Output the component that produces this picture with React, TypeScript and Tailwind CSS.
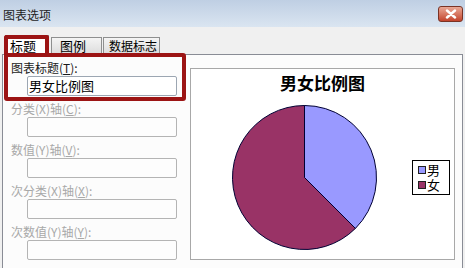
import React from "react";

function Field({ label, accel, enabled, value, last }: { label: string; accel: string; enabled?: boolean; value?: string; last?: boolean }) {
  return (
    <div className={last ? "flex flex-col" : "flex flex-col mb-[5px]"}>
      <div className={enabled ? "h-[16px] leading-[16px] text-[12px] text-[#1a1a1a] whitespace-nowrap" : "h-[16px] leading-[16px] text-[12px] text-[#a8a8a8] whitespace-nowrap"}>
        {label}(<span className="underline">{accel}</span>):
      </div>
      <div
        className={
          enabled
            ? "ml-[16px] w-[150px] h-[20px] border border-[#9ca6b2] rounded-[2px] bg-white flex items-center pl-[1px] text-[13px] leading-[18px] text-black"
            : "ml-[16px] w-[150px] h-[20px] border border-[#b4b4b4] rounded-[2px] bg-[#fdfdfd]"
        }
      >
        {value}
      </div>
    </div>
  );
}

function Pie() {
  const cx = 72.5;
  const cy = 72.5;
  const r = 72;
  const a = (135 * Math.PI) / 180;
  const ex = cx + r * Math.sin(a);
  const ey = cy - r * Math.cos(a);
  return (
    <svg width="145" height="145" viewBox="0 0 145 145">
      <path d={`M${cx},${cy} L${cx},${cy - r} A${r},${r} 0 0 1 ${ex},${ey} Z`} fill="#9999ff" stroke="#000033" strokeWidth="1" />
      <path d={`M${cx},${cy} L${ex},${ey} A${r},${r} 0 1 1 ${cx},${cy - r} Z`} fill="#993366" stroke="#000033" strokeWidth="1" />
    </svg>
  );
}

export default function App() {
  return (
    <div className="w-[465px] h-[268px] bg-[#f0f0f0] relative overflow-hidden font-['Noto_Sans_CJK_SC',sans-serif]">
      {/* title bar */}
      <div className="h-[27px] flex justify-between bg-linear-to-b from-[#bfcfe3] to-[#dae5f1]">
        <div className="pl-[3px] pt-[7px] text-[12px] leading-[16px] text-[#1e1e1e]">图表选项</div>
        <div className="mt-[6px] mr-[2px] w-[25px] h-[16px] rounded-[3px] border border-[#7a3325] bg-linear-to-b from-[#e9a896] to-[#c2432c] flex items-center justify-center">
          <svg width="12" height="10" viewBox="0 0 12 10">
            <path d="M2 1.5 L10 8.5 M10 1.5 L2 8.5" stroke="white" strokeWidth="2.4" strokeLinecap="round" />
          </svg>
        </div>
      </div>

      {/* tabs */}
      <div className="mt-[8px] pl-[5px] h-[20px] flex items-end gap-[1px] relative z-10">
        <div className="w-[44px] h-[20px] bg-white border-l border-t border-r border-[#898c95] flex items-start pl-[4px] pt-[2px] text-[13px] leading-[16px] text-black">标题</div>
        <div className="ml-[1px] w-[51px] h-[17px] mb-[1px] bg-linear-to-b from-[#f4f4f4] to-[#dcdcdc] border border-b-0 border-[#8e8f8f] flex items-center pl-[8px] text-[13px] leading-[16px] text-black">图例</div>
        <div className="w-[57px] h-[17px] mb-[1px] bg-linear-to-b from-[#f4f4f4] to-[#dcdcdc] border border-b-0 border-[#8e8f8f] flex items-center pl-[5px] text-[12px] leading-[16px] text-black">数据标志</div>
      </div>

      {/* panel */}
      <div className="mx-[2px] -mt-[1px] h-[220px] border border-[#898c95] bg-[#fcfcfc] flex">
        <div className="w-[187px] pl-[8px] pt-[5px] flex flex-col">
          <Field label="图表标题" accel="T" enabled value="男女比例图" />
          <Field label="分类(X)轴" accel="C" />
          <Field label="数值(Y)轴" accel="V" />
          <Field label="次分类(X)轴" accel="X" />
          <Field label="次数值(Y)轴" accel="Y" last />
        </div>
        <div className="mt-[13px] w-[265px] h-[192px] border border-[#a8a8a8] bg-white flex flex-col">
          <div className="pt-[3px] text-center text-[17px] leading-[22px] font-bold text-black">男女比例图</div>
          <div className="mt-[11px] flex items-center">
            <div className="ml-[41px]">
              <Pie />
            </div>
            <div className="ml-[35px] w-[38px] h-[35px] border border-black bg-white flex items-center pl-[5px]">
              <div className="flex flex-col gap-[7px]">
                <div className="w-[8px] h-[8px] border border-[#202020] bg-[#9999ff]" />
                <div className="w-[8px] h-[8px] border border-[#202020] bg-[#993366]" />
              </div>
              <div className="ml-[1px] text-[13px] leading-[15px] text-black font-['Liberation_Sans','Noto_Sans_CJK_SC',sans-serif]">
                男
                <br />
                女
              </div>
            </div>
          </div>
        </div>
      </div>

      {/* red annotation boxes */}
      <div className="absolute left-[4px] top-[35px] w-[45px] h-[22px] border-[4px] border-b-0 border-[#9c1414] rounded-t-[3px] z-20" />
      <div className="absolute left-[4px] top-[53px] w-[182px] h-[48px] border-[4px] border-[#9c1414] rounded-[3px] z-20" />
    </div>
  );
}
